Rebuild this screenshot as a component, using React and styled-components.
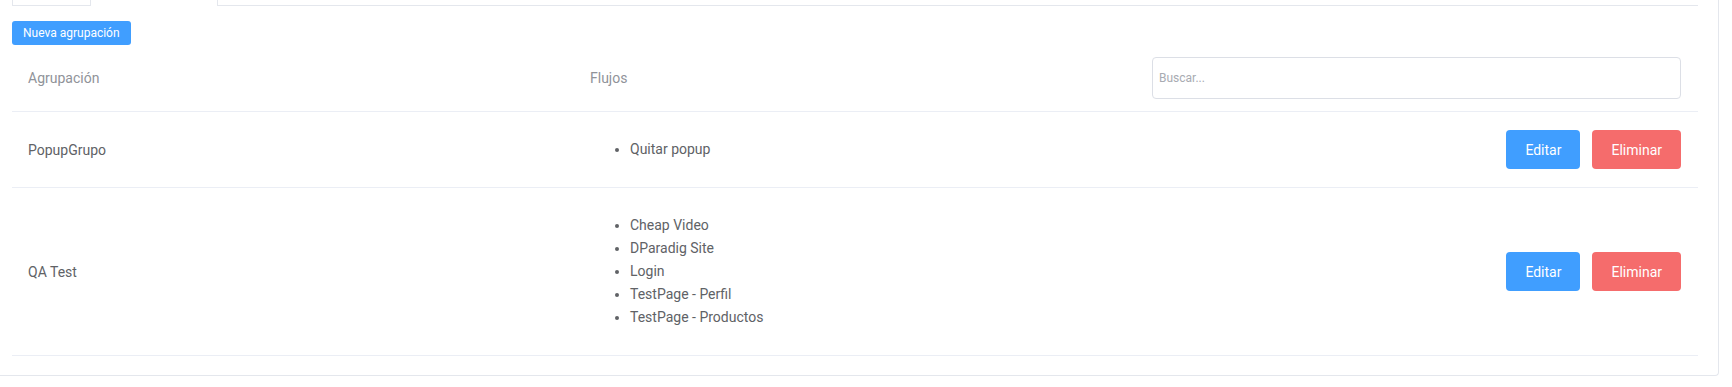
import React from 'react'
import styled, { createGlobalStyle } from 'styled-components';

const GlobalStyle = createGlobalStyle`
  html, body { margin:0; padding:0; background:#fff; }
  body { font-family: Roboto, 'Liberation Sans', Arial, sans-serif; color:#606266; }
`;

const groups = [
  { name: 'PopupGrupo', flows: ['Quitar popup'] },
  { name: 'QA Test', flows: ['Cheap Video', 'DParadig Site', 'Login', 'TestPage - Perfil', 'TestPage - Productos'] },
];

const App = () => {
  return (
    <>
      <GlobalStyle />
      <Card>
        <TabStrip>
          <TabBox />
          <TabRest />
        </TabStrip>
        <NewButton>Nueva agrupación</NewButton>
        <Table>
          <HeadRow>
            <HeadCell>Agrupación</HeadCell>
            <HeadCell>Flujos</HeadCell>
            <ActionCell>
              <Search placeholder="Buscar..." />
            </ActionCell>
          </HeadRow>
          {groups.map(g => (
            <Row key={g.name}>
              <Cell>{g.name}</Cell>
              <Cell>
                <FlowList>
                  {g.flows.map(f => <li key={f}>{f}</li>)}
                </FlowList>
              </Cell>
              <ActionCell>
                <ActionButton color='#409eff'>Editar</ActionButton>
                <ActionButton color='#f56c6c'>Eliminar</ActionButton>
              </ActionCell>
            </Row>
          ))}
        </Table>
      </Card>
    </>
  )
}

const Card = styled.div`
  box-sizing:border-box;
  width:1719px;
  padding:0 20px 19px 12px;
  border-right:1px solid #e4e7ed;
  border-bottom:1px solid #e4e7ed;
  border-bottom-right-radius:4px;
`;
const TabStrip = styled.div`
  display:flex;
  height:6px;
`;
const TabBox = styled.div`
  box-sizing:border-box;
  width:79px;
  border:1px solid #e4e7ed;
  border-top:none;
`;
const TabRest = styled.div`
  box-sizing:border-box;
  flex:1;
  margin-left:126px;
  border-left:1px solid #e4e7ed;
  border-bottom:1px solid #e4e7ed;
`;
const NewButton = styled.button`
  display:block;
  margin-top:15px;
  height:24px;
  padding:0 11px;
  border:none;
  border-radius:3px;
  background:#409eff;
  color:#fff;
  font-family:inherit;
  font-size:12px;
`;
const Table = styled.div`
  display:flex;
  flex-direction:column;
`;
const HeadRow = styled.div`
  display:grid;
  grid-template-columns:1fr 1fr 1fr;
  align-items:center;
  border-bottom:1px solid #ebeef5;
`;
const Row = styled(HeadRow)``;
const HeadCell = styled.div`
  padding:12px 16px;
  font-size:14px;
  color:#909399;
`;
const Cell = styled.div`
  padding:12px 16px;
  font-size:14px;
  color:#606266;
`;
const ActionCell = styled.div`
  display:flex;
  justify-content:flex-end;
  gap:12px;
  padding:12px 17px 12px 16px;
`;
const Search = styled.input`
  box-sizing:border-box;
  width:100%;
  height:42px;
  padding:0 6px;
  border:1px solid #dcdfe6;
  border-radius:4px;
  font-family:inherit;
  font-size:12px;
  color:#606266;
  outline:none;
  &::placeholder { color:#a8abb2; }
`;
const FlowList = styled.ul`
  margin:14px 0;
  padding-left:40px;
  line-height:23px;
`;
const ActionButton = styled.button`
  height:39px;
  padding:0 19px;
  border:none;
  border-radius:4px;
  background:${props => props.color};
  color:#fff;
  font-family:inherit;
  font-size:14px;
`;

export default App;
